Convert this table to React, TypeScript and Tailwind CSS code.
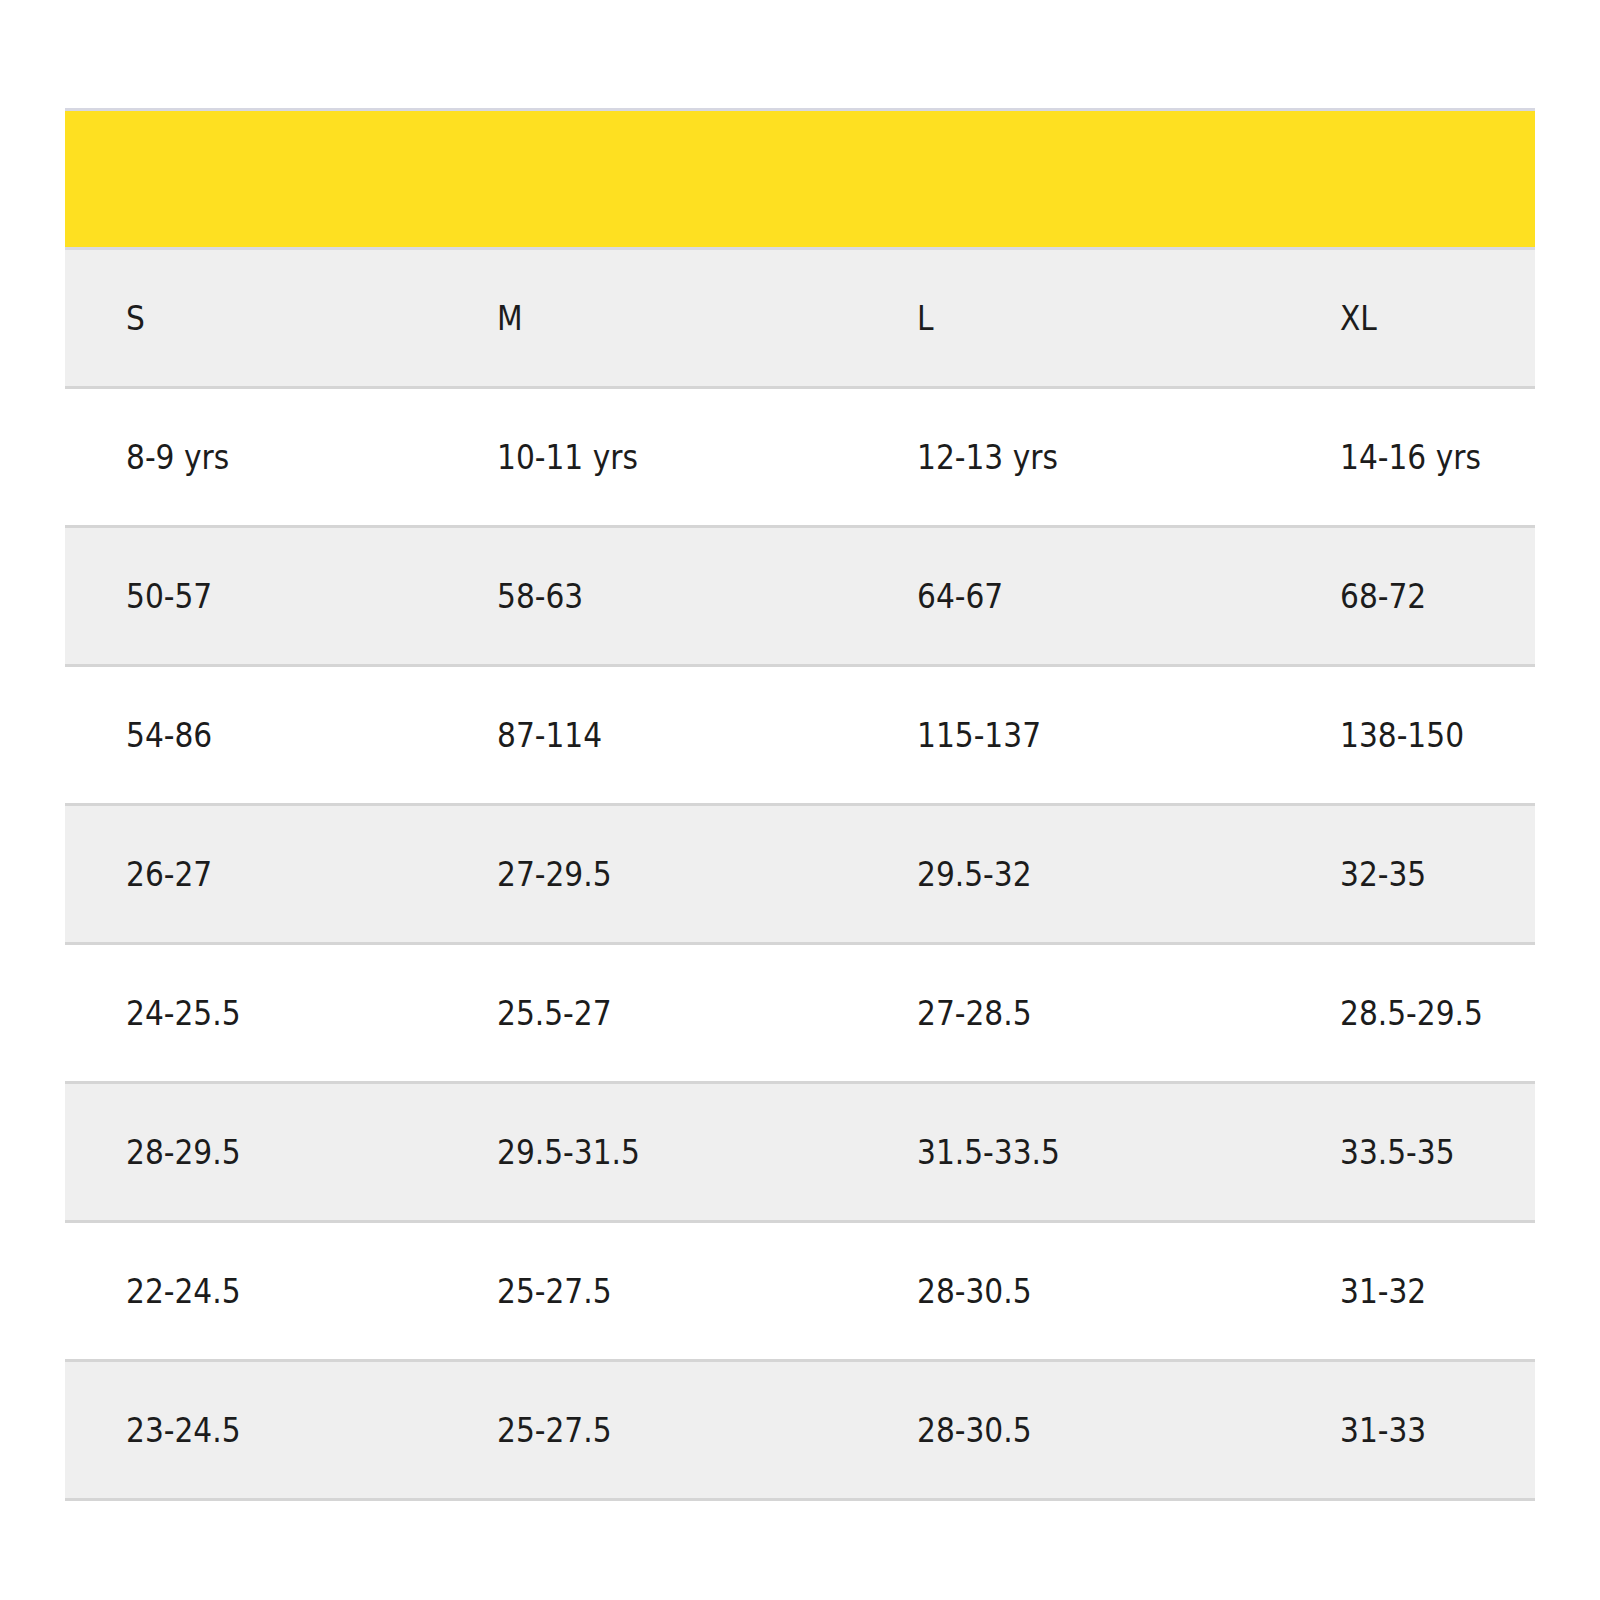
const headers = ["S", "M", "L", "XL"]

const rows = [
  ["8-9 yrs", "10-11 yrs", "12-13 yrs", "14-16 yrs"],
  ["50-57", "58-63", "64-67", "68-72"],
  ["54-86", "87-114", "115-137", "138-150"],
  ["26-27", "27-29.5", "29.5-32", "32-35"],
  ["24-25.5", "25.5-27", "27-28.5", "28.5-29.5"],
  ["28-29.5", "29.5-31.5", "31.5-33.5", "33.5-35"],
  ["22-24.5", "25-27.5", "28-30.5", "31-32"],
  ["23-24.5", "25-27.5", "28-30.5", "31-33"],
]

function Row({ cells, shaded }: { cells: string[]; shaded: boolean }) {
  return (
    <div
      className={`grid grid-cols-[371px_420px_423px_1fr] h-[139px] items-center pl-[61px] border-b-[3px] border-[#d5d5d5] ${
        shaded ? "bg-[#efefef]" : "bg-white"
      }`}
    >
      {cells.map((c, i) => (
        <div key={i} className="text-[33px] leading-none text-[#1c1c1c] whitespace-nowrap">
          {c}
        </div>
      ))}
    </div>
  )
}

export default function App() {
  return (
    <div
      className="min-h-[1600px] w-[1600px] bg-white pt-[108px] pl-[65px]"
      style={{ fontFamily: '"DejaVu Sans Condensed", "Liberation Sans", sans-serif' }}
    >
      <div className="w-[1470px]">
        <div className="h-[142px] bg-[#fee021] border-t-[3px] border-b-[3px] border-t-[#d6d7e2] border-b-[#d9d9e0]" />
        <Row cells={headers} shaded />
        {rows.map((r, i) => (
          <Row key={i} cells={r} shaded={i % 2 === 1} />
        ))}
      </div>
    </div>
  )
}
